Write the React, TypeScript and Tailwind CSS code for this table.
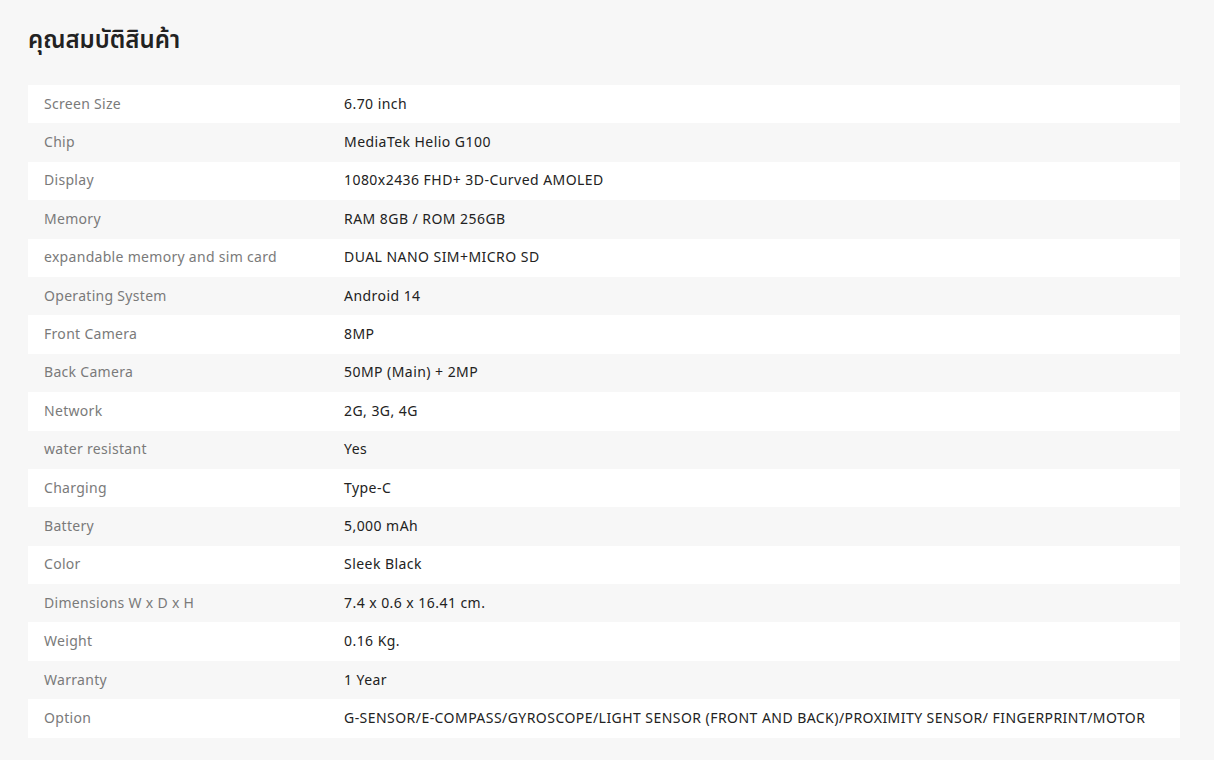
const specs: Array<[string, string]> = [
  ['Screen Size', '6.70 inch'],
  ['Chip', 'MediaTek Helio G100'],
  ['Display', '1080x2436 FHD+ 3D-Curved AMOLED'],
  ['Memory', 'RAM 8GB / ROM 256GB'],
  ['expandable memory and sim card', 'DUAL NANO SIM+MICRO SD'],
  ['Operating System', 'Android 14'],
  ['Front Camera', '8MP'],
  ['Back Camera', '50MP (Main) + 2MP'],
  ['Network', '2G, 3G, 4G'],
  ['water resistant', 'Yes'],
  ['Charging', 'Type-C'],
  ['Battery', '5,000 mAh'],
  ['Color', 'Sleek Black'],
  ['Dimensions W x D x H', '7.4 x 0.6 x 16.41 cm.'],
  ['Weight', '0.16 Kg.'],
  ['Warranty', '1 Year'],
  [
    'Option',
    'G-SENSOR/E-COMPASS/GYROSCOPE/LIGHT SENSOR (FRONT AND BACK)/PROXIMITY SENSOR/ FINGERPRINT/MOTOR',
  ],
]

export default function App() {
  return (
    <div className="min-h-[760px] bg-[#f7f7f7] px-[28px] pt-[22px] pb-[22px] font-['Noto_Sans','Noto_Sans_Thai','Noto_Sans_CJK_SC',sans-serif]">
      <h2 className="text-[24px] font-semibold leading-[34px] text-[#222]">
        คุณสมบัติสินค้า
      </h2>

      <div className="mt-[29px] w-[1152px]">
        {specs.map(([label, value], i) => (
          <div
            key={label}
            className={
              'flex h-[38.4px] items-center pb-[1px] text-[14px] leading-[20px] ' +
              (i % 2 === 0 ? 'bg-white' : 'bg-[#f7f7f7]')
            }
          >
            <div className="w-[300px] shrink-0 pl-[16px] tracking-[0.3px] text-[#7a7a7a]">
              {label}
            </div>
            <div className="pl-[16px] tracking-[0.45px] text-[#222]">{value}</div>
          </div>
        ))}
      </div>
    </div>
  )
}
